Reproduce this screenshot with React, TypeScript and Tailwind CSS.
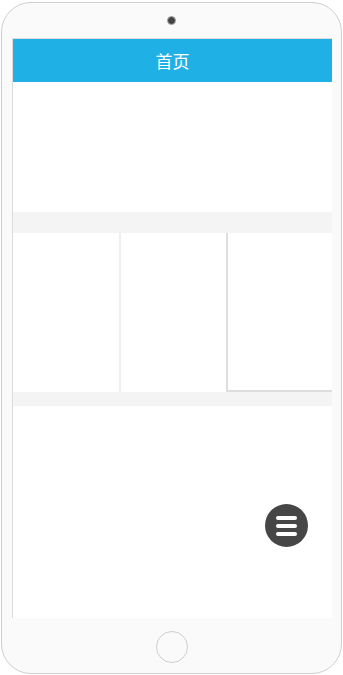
import React from "react";

export default function App() {
  return (
    <div className="w-[343px] h-[675px] bg-white pt-[2px] pl-[1px]" style={{ fontFamily: '"Noto Sans CJK SC", "Noto Sans", sans-serif' }}>
      <div className="w-[341px] h-[672px] rounded-[30px] border border-[#cfcfcf] bg-[#fafafa] flex flex-col">
        <div className="h-[35px] flex items-center justify-center">
          <div className="w-[9px] h-[9px] rounded-full bg-[#444] border border-[#aaa]" />
        </div>
        <div className="ml-[10px] w-[320px] h-[580px] border-t border-l border-[#dcdcdc] bg-white flex flex-col relative">
          <div className="h-[43px] bg-[#1fb0e5] flex items-center justify-center text-white text-[17px]">首页</div>
          <div className="h-[130px] bg-white" />
          <div className="h-[21px] bg-[#f4f4f4]" />
          <div className="h-[159px] flex">
            <div className="w-[108px] border-r-2 border-[#efefef]" />
            <div className="w-[107px] border-r-2 border-[#dedede]" />
            <div className="flex-1 border-b-2 border-[#dedede]" />
          </div>
          <div className="h-[14px] bg-[#f4f4f4]" />
          <div className="flex-1 bg-white" />
          <div className="absolute left-[252px] top-[465px] w-[43px] h-[43px] rounded-full bg-[#464646] flex flex-col items-center justify-center gap-[4px]">
            <div className="w-[21px] h-[4px] rounded-[2px] bg-white" />
            <div className="w-[21px] h-[4px] rounded-[2px] bg-white" />
            <div className="w-[21px] h-[4px] rounded-[2px] bg-white" />
          </div>
        </div>
        <div className="flex-1 flex items-center justify-center pt-[3px]">
          <div className="w-[32px] h-[32px] rounded-full border border-[#cfcfcf]" />
        </div>
      </div>
    </div>
  );
}
